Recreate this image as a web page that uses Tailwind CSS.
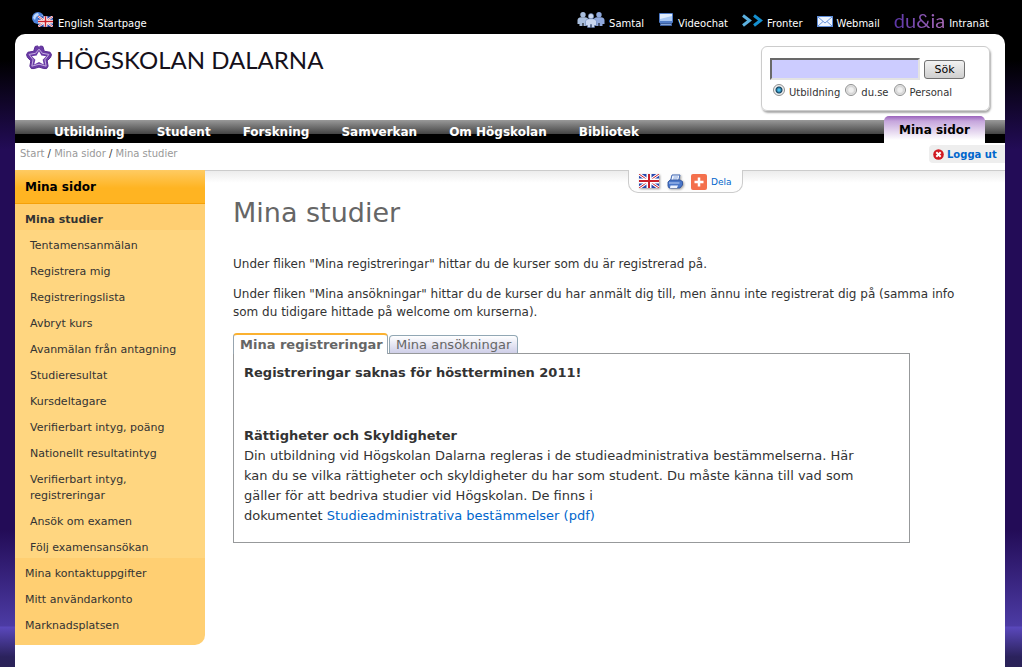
<!DOCTYPE html>
<html lang="sv">
<head>
<meta charset="utf-8">
<meta name="viewport" content="width=device-width, initial-scale=1">
<title>Mina studier - Högskolan Dalarna</title>
<script src="https://cdn.jsdelivr.net/npm/@tailwindcss/browser@4"></script>
</head>
<body class="flex min-h-screen flex-col bg-black bg-[linear-gradient(to_bottom,#000_60px,#230c57_150px,#230c57_530px,#4c3ba4_626px,#5a48bc_627px,#2b225c_657px,#2b2358_667px)] font-['DejaVu_Sans',sans-serif] text-[11px] text-[#333]">
<svg class="hidden" aria-hidden="true">
  <symbol id="uk" viewBox="0 0 20 14">
    <rect width="20" height="14" fill="#2746ad"/>
    <path d="M0 0 20 14M20 0 0 14" stroke="#fff" stroke-width="3"/>
    <path d="M0 0 20 14M20 0 0 14" stroke="#c8202c" stroke-width="1"/>
    <path d="M10 0V14M0 7H20" stroke="#fff" stroke-width="5"/>
    <path d="M10 0V14M0 7H20" stroke="#c8202c" stroke-width="2"/>
  </symbol>
  <symbol id="person" viewBox="0 0 12 14">
    <circle cx="6" cy="2.700" r="2.700"/>
    <path d="M0.500 8Q1 5.300 4 5.300H8Q11 5.300 11.500 8V12H9.500V14H6.500V11H5.500V14H2.500V12H0.500Z"/>
  </symbol>
  <symbol id="star" viewBox="0 0 28 26">
    <path d="M14 2.500 15.500 1 18 1.500 19.500 6.500 25.500 7.500 27 10 26 13 22.500 16.500 23.500 22 22 24.500 19 24.500 14 23 9 24.500 6 24.500 4.500 22 5.500 16.500 2 13 1 10 2.500 7.500 8.500 6.500 10 1.500 12.500 1Z" fill="#6a3ba6" stroke="#54278f" stroke-linejoin="round"/>
    <path d="M14 4.300 17.500 8.600 24.300 9.800 20.200 15.300 21.400 22 14 20 6.600 22 7.800 15.300 3.700 9.800 10.500 8.600Z" fill="none" stroke="#c9b3e2" stroke-linejoin="round"/>
    <path d="M14 6.500 16.500 11 21.500 11.600 17.800 15.300 19 20.400 14 17.800 9 20.400 10.200 15.300 6.500 11.600 11.500 11Z" fill="#fff"/>
  </symbol>
</svg>

<div class="ml-[15px] mr-[17px] flex h-[34px] shrink-0 items-start justify-between pl-4 pr-4 pt-3 leading-4 text-white">
  <a href="#" class="flex gap-[5px]">
    <svg class="h-4 w-[22px]" viewBox="0 0 22 16" aria-hidden="true">
      <circle cx="7" cy="6" r="6" fill="#4f83dc"/><path d="M3 3Q5 1 7 1L8 3 5 5 4 8 2 6ZM8 5 12 3 11 7 8 8Z" fill="#bcd6fb"/>
      <svg x="7" y="4" width="15" height="11"><use href="#uk"/></svg>
    </svg>
    <span class="pt-1 text-[10px]">English Startpage</span>
  </a>
  <nav class="flex gap-[14px]" aria-label="Tjänster">
    <a href="#" class="flex gap-1">
      <svg class="h-4 w-7" viewBox="0 0 28 16" aria-hidden="true">
        <use href="#person" x="0" y="0" width="12" height="14" fill="#a9bedd"/>
        <use href="#person" x="16" y="0" width="12" height="14" fill="#8fa8dc"/>
        <use href="#person" x="8" y="1" width="12" height="15" fill="#c9d7f0" stroke="#5472ad" stroke-width=".5"/>
      </svg>
      <span class="pt-1 text-[10px]">Samtal</span>
    </a>
    <a href="#" class="flex gap-1">
      <svg class="h-4 w-4" viewBox="0 0 16 16" aria-hidden="true">
        <rect x="1" y="1" width="14" height="10" rx="1" fill="#4f7cc8"/><path d="M2 2H14V9H2Z" fill="#a9c8f4"/><path d="M2 2H14V4L2 7Z" fill="#e1edfd"/><path d="M2 11H14V14H2Z" fill="#3c5f9f"/><path d="M3 12.500H13" stroke="#86a5d6"/>
      </svg>
      <span class="pt-1 text-[10px]">Videochat</span>
    </a>
    <a href="#" class="flex gap-1">
      <svg class="h-4 w-[21px]" viewBox="0 0 21 16" aria-hidden="true" fill="none" stroke-width="3">
        <path d="M1 3.500 7.500 8.500 1 13.500" stroke="#5cb1e0"/><path d="M12 3.500 18.500 8.500 12 13.500" stroke="#1590d0"/>
      </svg>
      <span class="pt-1 text-[10px]">Fronter</span>
    </a>
    <a href="#" class="flex gap-1">
      <svg class="h-4 w-4" viewBox="0 0 16 16" aria-hidden="true">
        <rect x=".5" y="4.500" width="15" height="10" fill="#edf4ff" stroke="#5f8dd8"/><path d="M1 5 8 11 15 5M1 14 6 9.500M15 14 10 9.500" fill="none" stroke="#6b95da"/>
      </svg>
      <span class="pt-1 text-[10px]">Webmail</span>
    </a>
    <a href="#" class="flex gap-1">
      <span class="bg-[linear-gradient(to_right,#5b35a8,#a86bb8)] bg-clip-text font-[Lato,sans-serif] text-[20px] text-transparent">du&amp;ia</span>
      <span class="pt-1 text-[10px]">Intranät</span>
    </a>
  </nav>
</div>

<div class="ml-[15px] mr-[17px] flex grow flex-col rounded-t-[10px] bg-white">
  <header class="flex h-[82px] items-start justify-between pl-[10px] pr-[15px] pt-3">
    <a href="#" class="-mt-1 flex items-start gap-[3px] font-[Lato,sans-serif] text-[24px] leading-9 text-[#15101a]">
      <svg class="mt-[3px] h-[25px] w-7" viewBox="0 0 28 26" aria-hidden="true"><use href="#star"/></svg>
      <span>HÖGSKOLAN DALARNA</span>
    </a>
    <form class="h-[65px] w-[229px] rounded-md border border-[#ccc] pl-2 pt-[11px] shadow-[1px_2px_2px_#aaa]">
      <div class="flex items-center gap-1">
        <input type="text" aria-label="Sök" class="h-[22px] w-[150px] border-2 border-b-[#e3e3e3] border-l-[#696969] border-r-[#e3e3e3] border-t-[#696969] bg-[#ccf]">
        <button type="submit" class="h-[19px] w-[41px] rounded-[3px] border border-[#707070] bg-linear-to-b from-[#f2f2f2] to-[#cfcfcf] text-[11px] leading-[18px] text-black">Sök</button>
      </div>
      <div class="flex gap-[5px] pl-[3px] pt-1 text-[10px] leading-4">
        <label class="flex gap-1"><input type="radio" name="scope" checked class="h-3 w-3 appearance-none rounded-full border border-[#8e8f8f] bg-[radial-gradient(circle,#4cc0ee_1px,#14425f_3px,#f0f0f0_4px)]"><span class="pt-px">Utbildning</span></label>
        <label class="flex gap-1"><input type="radio" name="scope" class="h-3 w-3 appearance-none rounded-full border border-[#8e8f8f] bg-[radial-gradient(circle,#f0f0f0_2px,#d2d2d2_4px,#f4f4f4_5px)]"><span class="pt-px">du.se</span></label>
        <label class="flex gap-1"><input type="radio" name="scope" class="h-3 w-3 appearance-none rounded-full border border-[#8e8f8f] bg-[radial-gradient(circle,#f0f0f0_2px,#d2d2d2_4px,#f4f4f4_5px)]"><span class="pt-px">Personal</span></label>
      </div>
    </form>
  </header>

  <nav class="flex h-[27px] items-end justify-between bg-[linear-gradient(to_bottom,#fff_4px,#999_4px,#444_18px,#000_18px)] pr-5 text-[12px] font-bold text-white" aria-label="Huvudmeny">
    <div class="flex gap-8 pl-[39px] leading-[22px]">
      <a href="#">Utbildning</a><a href="#">Student</a><a href="#">Forskning</a><a href="#">Samverkan</a><a href="#">Om Högskolan</a><a href="#">Bibliotek</a>
    </div>
    <a href="#" class="h-[27px] w-[101px] rounded-t-[5px] bg-[linear-gradient(to_bottom,#9a62bb,#c5a5dc_5px,#fff_24px)] text-center leading-7 text-black">Mina sidor</a>
  </nav>

  <div class="flex h-[27px] items-start justify-between text-[10px]">
    <nav class="pl-[5px] pt-[3px] leading-4" aria-label="Brödsmulor"><a href="#" class="text-[#999]">Start</a> / <a href="#" class="text-[#999]">Mina sidor</a> / <a href="#" class="text-[#999]">Mina studier</a></nav>
    <a href="#" class="mt-[2px] flex h-[18px] w-[76px] items-center gap-[3px] rounded-l bg-[#eee] pl-1 text-[10px] font-bold text-[#06c]">
      <svg class="h-[11px] w-[11px] shrink-0" viewBox="0 0 11 11" aria-hidden="true"><circle cx="5.500" cy="5.500" r="5.300" fill="#d01820"/><path d="M3.300 3.300 7.700 7.700M7.700 3.300 3.300 7.700" stroke="#fff" stroke-width="2"/></svg>
      <span class="whitespace-nowrap">Logga ut</span>
    </a>
  </div>

  <div class="flex grow items-start">
    <aside class="w-[190px] shrink-0 rounded-br-[10px] bg-[#ffcf72] pb-[9px] leading-4">
      <h2 class="border-b border-[#f5a10a] bg-[linear-gradient(to_bottom,#ffcb62,#ffb422_18px,#ffb422)] pl-[10px] pt-[2px] text-[12px] font-bold leading-[31px] text-black"><a href="#">Mina sidor</a></h2>
      <ul>
        <li><a href="#" class="block pt-2 pb-[2px] pl-[10px] font-bold">Mina studier</a>
          <ul class="bg-[#ffd680]">
            <li><a href="#" class="block pt-2 pb-[2px] pl-[15px]">Tentamensanmälan</a></li>
            <li><a href="#" class="block pt-2 pb-[2px] pl-[15px]">Registrera mig</a></li>
            <li><a href="#" class="block pt-2 pb-[2px] pl-[15px]">Registreringslista</a></li>
            <li><a href="#" class="block pt-2 pb-[2px] pl-[15px]">Avbryt kurs</a></li>
            <li><a href="#" class="block pt-2 pb-[2px] pl-[15px]">Avanmälan från antagning</a></li>
            <li><a href="#" class="block pt-2 pb-[2px] pl-[15px]">Studieresultat</a></li>
            <li><a href="#" class="block pt-2 pb-[2px] pl-[15px]">Kursdeltagare</a></li>
            <li><a href="#" class="block pt-2 pb-[2px] pl-[15px]">Verifierbart intyg, poäng</a></li>
            <li><a href="#" class="block pt-2 pb-[2px] pl-[15px]">Nationellt resultatintyg</a></li>
            <li><a href="#" class="block pt-2 pb-[2px] pl-[15px]">Verifierbart intyg,<br>registreringar</a></li>
            <li><a href="#" class="block pt-2 pb-[2px] pl-[15px]">Ansök om examen</a></li>
            <li><a href="#" class="block pt-2 pb-[2px] pl-[15px]">Följ examensansökan</a></li>
          </ul>
        </li>
        <li><a href="#" class="block pt-2 pb-[2px] pl-[10px]">Mina kontaktuppgifter</a></li>
        <li><a href="#" class="block pt-2 pb-[2px] pl-[10px]">Mitt användarkonto</a></li>
        <li><a href="#" class="block pt-2 pb-[2px] pl-[10px]">Marknadsplatsen</a></li>
      </ul>
    </aside>

    <main class="relative grow border-t border-[#ccc] bg-[linear-gradient(to_bottom,#ececec,#fff_12px)] pl-7 pr-6 pt-[25px] text-[12px] leading-[18px]">
      <div class="absolute -top-px right-[262px] flex h-[23px] w-[115px] items-start gap-2 rounded-b-[10px] border border-t-0 border-[#ccc] bg-[#fdfdfd] pl-[10px] pt-1 text-[9px] leading-4">
        <a href="#" aria-label="English"><svg class="h-[14px] w-5 drop-shadow-[1px_1px_1px_#999]" aria-hidden="true"><use href="#uk"/></svg></a>
        <a href="#" aria-label="Skriv ut"><svg class="h-4 w-4 drop-shadow-[1px_1px_1px_#999]" viewBox="0 0 16 16" aria-hidden="true">
          <path d="M5 1H13L11.500 7H3.500Z" fill="#f6faff" stroke="#3f66b5"/><path d="M6.500 3H11M6 5H10.500" stroke="#86a4dc"/><path d="M1 8 3 6H13L15.500 7.500V11L13 14H2L1 12Z" fill="#4a77c9" stroke="#2a4e9c" stroke-width=".8"/><path d="M2 9H12.500" stroke="#bcd2f7"/><path d="M3.500 11.500H11L10 14H3Z" fill="#edf3ff"/></svg></a>
        <a href="#" class="flex gap-1 text-[#06c]"><svg class="h-4 w-4" viewBox="0 0 16 16" aria-hidden="true"><rect width="16" height="16" rx="2" fill="#f4704c"/><path d="M8 3.500V12.500M3.500 8H12.500" stroke="#fff" stroke-width="2.500"/></svg><span>Dela</span></a>
      </div>
      <h1 class="text-[27px] leading-[34px] text-[#666]">Mina studier</h1>
      <p class="mt-[25px]">Under fliken "Mina registreringar" hittar du de kurser som du är registrerad på.</p>
      <p class="mt-3">Under fliken "Mina ansökningar" hittar du de kurser du har anmält dig till, men ännu inte registrerat dig på (samma info som du tidigare hittade på welcome om kurserna).</p>
      <div class="relative z-10 mt-3 flex items-end gap-px text-[13px] text-[#666]" role="tablist">
        <button type="button" role="tab" aria-selected="true" class="-mb-px h-[21px] w-[155px] rounded-t-[4px] border border-b-0 border-t-2 border-[#97a5b0] border-t-[#fbb130] bg-white pl-1.5 text-left font-bold leading-5 whitespace-nowrap">Mina registreringar</button>
        <button type="button" role="tab" aria-selected="false" class="h-[18px] w-[129px] rounded-t-[4px] border border-b-0 border-[#91a7b4] bg-linear-to-b from-white to-[#cfcfe8] pl-1.5 text-left leading-[18px] whitespace-nowrap">Mina ansökningar</button>
      </div>
      <section class="w-[677px] max-w-full border border-[#97999b] pb-4 pl-[10px] pr-[30px] pt-[9px] text-[13px] leading-5" role="tabpanel">
        <h3 class="font-bold">Registreringar saknas för höstterminen 2011!</h3>
        <h3 class="mt-[43px] font-bold">Rättigheter och Skyldigheter</h3>
        <p>Din utbildning vid Högskolan Dalarna regleras i de studieadministrativa bestämmelserna. Här kan du se vilka rättigheter och skyldigheter du har som student. Du måste känna till vad som gäller för att bedriva studier vid Högskolan. De finns i</p>
        <p>dokumentet <a href="#" class="text-[#06c]">Studieadministrativa bestämmelser (pdf)</a></p>
      </section>
    </main>
  </div>
</div>
</body>
</html>
